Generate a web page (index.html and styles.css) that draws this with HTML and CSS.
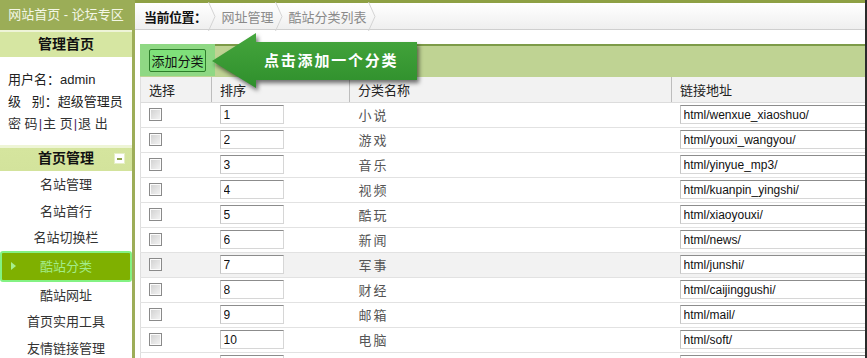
FILE: index.html
```html
<!DOCTYPE html>
<html lang="zh">
<head>
<meta charset="utf-8">
<title>酷站分类列表</title>
<link rel="stylesheet" href="styles.css">
</head>
<body>
<div class="page">
  <aside class="sidebar">
    <div class="site-title">网站首页 - 论坛专区</div>
    <div class="panel-title">管理首页</div>
    <div class="user-info">
      <p>用户名：admin</p>
      <p>级&nbsp;&nbsp;&nbsp;别：超级管理员</p>
      <p class="links"><a>密 码</a><span class="sep">|</span><a>主 页</a><span class="sep">|</span><a>退 出</a></p>
    </div>
    <div class="menu-title">首页管理<span class="toggle"></span></div>
    <ul class="menu">
      <li>名站管理</li>
      <li>名站首行</li>
      <li>名站切换栏</li>
      <li class="active"><span class="tri"></span>酷站分类</li>
      <li>酷站网址</li>
      <li>首页实用工具</li>
      <li>友情链接管理</li>
    </ul>
  </aside>
  <main class="main">
    <div class="crumbs">
      <span class="crumb-label">当前位置：</span>
      <svg class="chev" viewBox="0 0 8 29" width="8" height="29"><polyline points="0.5,0 7,14.5 0.5,29" fill="none" stroke="#d4d4d4" stroke-width="1"/></svg>
      <span class="crumb">网址管理</span>
      <svg class="chev" viewBox="0 0 8 29" width="8" height="29"><polyline points="0.5,0 7,14.5 0.5,29" fill="none" stroke="#d4d4d4" stroke-width="1"/></svg>
      <span class="crumb">酷站分类列表</span>
      <svg class="chev" viewBox="0 0 8 29" width="8" height="29"><polyline points="0.5,0 7,14.5 0.5,29" fill="none" stroke="#d4d4d4" stroke-width="1"/></svg>
    </div>
    <div class="content">
      <div class="toolbar">
        <span class="btn-glow"><button class="btn-add">添加分类</button></span>
      </div>
      <table class="list">
        <colgroup><col class="c1"><col class="c2"><col class="c3"><col class="c4"></colgroup>
        <thead>
          <tr><th>选择</th><th>排序</th><th>分类名称</th><th>链接地址</th></tr>
        </thead>
        <tbody>
          <tr><td><input type="checkbox" class="chk"></td><td><input class="txt sort" value="1"></td><td class="name">小说</td><td><input class="txt url" value="html/wenxue_xiaoshuo/"></td></tr>
          <tr><td><input type="checkbox" class="chk"></td><td><input class="txt sort" value="2"></td><td class="name">游戏</td><td><input class="txt url" value="html/youxi_wangyou/"></td></tr>
          <tr><td><input type="checkbox" class="chk"></td><td><input class="txt sort" value="3"></td><td class="name">音乐</td><td><input class="txt url" value="html/yinyue_mp3/"></td></tr>
          <tr><td><input type="checkbox" class="chk"></td><td><input class="txt sort" value="4"></td><td class="name">视频</td><td><input class="txt url" value="html/kuanpin_yingshi/"></td></tr>
          <tr><td><input type="checkbox" class="chk"></td><td><input class="txt sort" value="5"></td><td class="name">酷玩</td><td><input class="txt url" value="html/xiaoyouxi/"></td></tr>
          <tr><td><input type="checkbox" class="chk"></td><td><input class="txt sort" value="6"></td><td class="name">新闻</td><td><input class="txt url" value="html/news/"></td></tr>
          <tr class="hover"><td><input type="checkbox" class="chk"></td><td><input class="txt sort" value="7"></td><td class="name">军事</td><td><input class="txt url" value="html/junshi/"></td></tr>
          <tr><td><input type="checkbox" class="chk"></td><td><input class="txt sort" value="8"></td><td class="name">财经</td><td><input class="txt url" value="html/caijinggushi/"></td></tr>
          <tr><td><input type="checkbox" class="chk"></td><td><input class="txt sort" value="9"></td><td class="name">邮箱</td><td><input class="txt url" value="html/mail/"></td></tr>
          <tr><td><input type="checkbox" class="chk"></td><td><input class="txt sort" value="10"></td><td class="name">电脑</td><td><input class="txt url" value="html/soft/"></td></tr>
          <tr><td><input type="checkbox" class="chk"></td><td><input class="txt sort" value=""></td><td class="name"></td><td><input class="txt url" value=""></td></tr>
        </tbody>
      </table>
    </div>
    <div class="callout">
      <svg class="arrow" viewBox="0 0 230 75" width="230" height="75">
        <defs>
          <linearGradient id="ag" x1="0" y1="0" x2="0" y2="1">
            <stop offset="0" stop-color="#45a63d"/>
            <stop offset="1" stop-color="#2f8f2c"/>
          </linearGradient>
        </defs>
        <polygon points="4,31 48,3 48,12 209,12 209,50 48,50 48,58" fill="url(#ag)"/>
      </svg>
      <span class="callout-text">点击添加一个分类</span>
    </div>
  </main>
</div>
</body>
</html>
```

FILE: styles.css
```css
* { box-sizing: border-box; }
html, body { margin: 0; padding: 0; background: #fff; }
body {
  font-family: "Liberation Sans", "Noto Sans CJK SC", sans-serif;
  font-size: 13px;
  color: #222;
  overflow: hidden;
}
.page {
  display: flex;
  width: 867px;
  height: 358px;
  overflow: hidden;
  border-right: 2px solid #2a2a2a;
}
.sidebar {
  flex: 0 0 135px;
  width: 135px;
  border-right: 3px solid #9dad58;
  background: #fff;
}
.site-title {
  height: 30px;
  line-height: 30px;
  background: #9bad57;
  color: #f4f7e6;
  text-align: center;
  font-size: 13px;
}
.panel-title {
  height: 27px;
  line-height: 25px;
  border-top: 2px solid #eef4d8;
  background: #d6e6a2;
  text-align: center;
  font-weight: bold;
  font-size: 14px;
  color: #111;
}
.user-info {
  padding: 12px 0 0 8px;
}
.user-info p {
  margin: 0;
  line-height: 22px;
  color: #222;
}
.links a { color: #333; }
.links .sep { color: #4b2a6b; margin: 0 1px; }
.menu-title {
  position: relative;
  margin-top: 10px;
  height: 26px;
  line-height: 27px;
  background: linear-gradient(#eef5d6 0, #eef5d6 3px, #d5e59e 3px, #d3e39c 100%);
  text-align: center;
  font-weight: bold;
  font-size: 14px;
  color: #111;
}
.toggle {
  position: absolute;
  right: 7px;
  top: 8px;
  width: 11px;
  height: 11px;
  background: #fff;
  border: 1px solid #e6efc6;
}
.toggle::after {
  content: "";
  position: absolute;
  left: 2px;
  top: 4px;
  width: 5px;
  height: 2px;
  background: #8ea34a;
}
.menu {
  list-style: none;
  margin: 0;
  padding: 0;
}
.menu li {
  height: 26.6px;
  line-height: 27px;
  text-align: center;
  color: #333;
}
.menu li.active {
  position: relative;
  height: 31px;
  line-height: 27px;
  background: #7fb000;
  border: 2px solid #83f283;
  border-radius: 3px;
  color: #a2ec8a;
}
.tri {
  position: absolute;
  left: 9px;
  top: 9px;
  width: 0;
  height: 0;
  border-left: 5px solid #a6f08c;
  border-top: 4px solid transparent;
  border-bottom: 4px solid transparent;
}
.main {
  position: relative;
  flex: 1 1 auto;
  min-width: 0;
  overflow: hidden;
}
.crumbs {
  display: flex;
  align-items: center;
  height: 30px;
  border-top: 3px solid #8ea044;
  border-bottom: 1px solid #cfcfcf;
  background: linear-gradient(#ffffff, #efefef);
  padding-left: 9px;
  white-space: nowrap;
}
.crumb-label { font-weight: bold; color: #111; letter-spacing: -0.5px; }
.crumb { color: #8a8a8a; }
.chev { display: block; margin: 0 6px 0 1px; flex: 0 0 8px; }
.content {
  padding: 14px 0 0 5px;
}
.toolbar {
  display: flex;
  align-items: center;
  height: 33px;
  width: 1000px;
  border-top: 2px solid #7d9b48;
  background: #bfd393;
}
.btn-glow {
  display: flex;
  align-items: center;
  margin-top: -3px;
  height: 32px;
  padding: 0 9px 0 2px;
  background: #8fd884;
}
.btn-add {
  height: 23px;
  width: 57px;
  padding: 0;
  margin-left: 7px;
  background: #7fe07a;
  border: 1px solid #2d7d2a;
  border-radius: 2px;
  font-family: "Liberation Sans", "Noto Sans CJK SC", sans-serif;
  font-size: 13px;
  color: #111;
}
.list {
  width: 1000px;
  table-layout: fixed;
  border-collapse: collapse;
  border-left: 1px solid #dedede;
}
.list col.c1 { width: 71px; }
.list col.c2 { width: 138px; }
.list col.c3 { width: 322px; }
.list col.c4 { width: 469px; }
.list th {
  height: 25px;
  padding: 0 0 0 8px;
  text-align: left;
  font-weight: normal;
  color: #222;
  background: #f2f2f2;
  border-bottom: 1px solid #dcdcdc;
  border-left: 1px solid #bdbdbd;
}
.list th:first-child { border-left: none; }
.list td {
  height: 25px;
  padding: 0 0 0 8px;
  border-bottom: 1px solid #e2e2e2;
  vertical-align: middle;
}
.list tr.hover td { background: #f2f2f2; }
.list td.name {
  color: #555;
  letter-spacing: 2px;
  padding-left: 9px;
}
.chk {
  -webkit-appearance: none;
  appearance: none;
  display: block;
  margin: 0;
  width: 13px;
  height: 13px;
  border: 1px solid #8a8a8a;
  background: linear-gradient(135deg, #cfcfcf, #f5f5f5);
  box-shadow: inset 0 0 0 1px #fbfbfb;
}
.txt {
  display: block;
  height: 19px;
  padding: 0 0 0 3px;
  border: 1px solid #d6d6d6;
  border-top-color: #8c8c8c;
  border-left-color: #c4c4c4;
  background: #fff;
  font-family: "Liberation Sans", sans-serif;
  font-size: 12px;
  color: #111;
  outline: none;
}
.sort { width: 64px; }
.url { width: 320px; }
.callout {
  position: absolute;
  left: 73px;
  top: 30px;
  width: 230px;
  height: 75px;
}
.arrow {
  position: absolute;
  left: 0;
  top: 0;
  filter: drop-shadow(2px 3px 2px rgba(0,0,0,0.55));
}
.callout-text {
  position: absolute;
  left: 56px;
  top: 20px;
  line-height: 20px;
  color: #fff;
  font-weight: bold;
  font-size: 15px;
  letter-spacing: 1.8px;
  white-space: nowrap;
  font-family: "Noto Sans CJK SC", sans-serif;
}
```
